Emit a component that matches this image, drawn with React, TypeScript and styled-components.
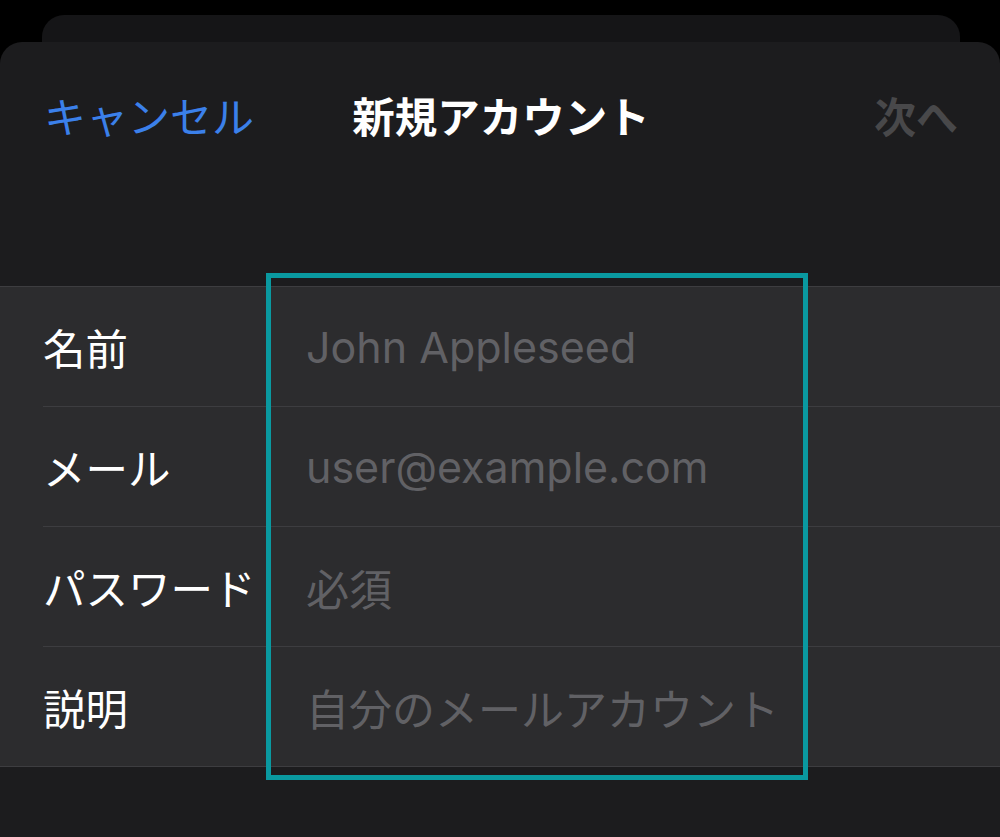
import React from 'react';
import styled, { createGlobalStyle } from 'styled-components';

const GlobalStyle = createGlobalStyle`
  html, body {
    margin: 0;
    padding: 0;
    background: #000;
  }
  body {
    font-family: Inter, "Noto Sans CJK JP", sans-serif;
    -webkit-font-smoothing: antialiased;
  }
`;

const Page = styled.div`
  height: 837px;
  padding-top: 15px;
  box-sizing: border-box;
  background: #000;
  display: flex;
  flex-direction: column;
  overflow: hidden;
`;

const BackCard = styled.div`
  height: 27px;
  margin: 0 40px 0 42px;
  background: #151517;
  border-radius: 22px 22px 0 0;
  flex-shrink: 0;
`;

const Sheet = styled.div`
  flex: 1;
  background: #1c1c1e;
  border-radius: 22px 22px 0 0;
  display: flex;
  flex-direction: column;
`;

const NavBar = styled.div`
  height: 144px;
  display: grid;
  grid-template-columns: 1fr auto 1fr;
  align-items: center;
  padding: 0 42px 0 44px;
`;

const NavButton = styled.span<{ $disabled?: boolean; $align?: 'left' | 'right' }>`
  font-family: "Noto Sans CJK JP", sans-serif;
  font-size: 42px;
  font-weight: ${(p) => (p.$disabled ? 700 : 400)};
  color: ${(p) => (p.$disabled ? '#48484a' : '#3b80ea')};
  text-align: ${(p) => p.$align ?? 'left'};
`;

const Title = styled.h1`
  margin: 0;
  font-family: "Noto Sans CJK JP", sans-serif;
  font-size: 42.5px;
  font-weight: 700;
  color: #fff;
`;

const Gap = styled.div`
  height: 100px;
`;

const Group = styled.div`
  position: relative;
  background: #2c2c2e;
  border-top: 1px solid #3d3d40;
  border-bottom: 1px solid #3d3d40;
`;

const Row = styled.div`
  display: flex;
  align-items: center;
  height: 120px;
  margin-left: 43px;
  border-top: 1px solid #3d3d40;
  box-sizing: border-box;

  &:first-child {
    border-top: none;
    height: 119px;
  }
`;

const Label = styled.div`
  width: 263px;
  font-family: "Noto Sans CJK JP", sans-serif;
  font-size: 42.5px;
  color: #fff;
  white-space: nowrap;
`;

const Placeholder = styled.div`
  font-size: 43px;
  color: #616165;
  white-space: nowrap;
`;

const Highlight = styled.div`
  position: absolute;
  left: 266px;
  top: -14px;
  width: 542px;
  height: 507px;
  box-sizing: border-box;
  border: 5px solid #0a99a0;
  pointer-events: none;
`;

const fields = [
  { label: '名前', placeholder: 'John Appleseed' },
  { label: 'メール', placeholder: 'user@example.com' },
  { label: 'パスワード', placeholder: '必須' },
  { label: '説明', placeholder: '自分のメールアカウント' },
];

const App: React.FC = () => {
  return (
    <>
      <GlobalStyle />
      <Page>
        <BackCard />
        <Sheet>
          <NavBar>
            <NavButton>キャンセル</NavButton>
            <Title>新規アカウント</Title>
            <NavButton $disabled $align="right">次へ</NavButton>
          </NavBar>
          <Gap />
          <Group>
            {fields.map((f) => (
              <Row key={f.label}>
                <Label>{f.label}</Label>
                <Placeholder>{f.placeholder}</Placeholder>
              </Row>
            ))}
            <Highlight />
          </Group>
        </Sheet>
      </Page>
    </>
  );
};

export default App;
